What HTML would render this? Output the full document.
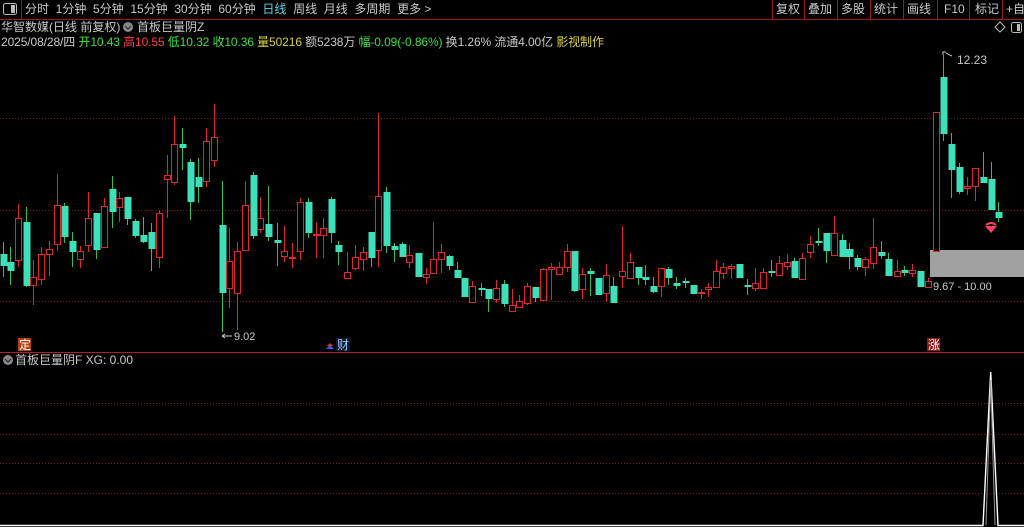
<!DOCTYPE html>
<html><head><meta charset="utf-8"><style>
*{margin:0;padding:0}
body{width:1024px;height:527px;background:#000;overflow:hidden;position:relative;font-family:"Liberation Sans","Noto Sans CJK SC",sans-serif;color:#c8c8c8;font-size:12px}
.t{position:absolute;white-space:nowrap;line-height:14px}
</style></head><body>
<svg width="1024" height="527" style="position:absolute;left:0;top:0" id="s" xmlns="http://www.w3.org/2000/svg">
<line x1="0" y1="19.5" x2="1024" y2="19.5" stroke="#a01818"/>
<line x1="21.5" y1="0" x2="21.5" y2="19" stroke="#a01818"/>
<g stroke="#a01818">
<line x1="772.5" y1="0" x2="772.5" y2="19"/><line x1="804.5" y1="0" x2="804.5" y2="19"/><line x1="837.5" y1="0" x2="837.5" y2="19"/><line x1="870.5" y1="0" x2="870.5" y2="19"/><line x1="903.5" y1="0" x2="903.5" y2="19"/><line x1="937.5" y1="0" x2="937.5" y2="19"/><line x1="969.5" y1="0" x2="969.5" y2="19"/><line x1="1002.5" y1="0" x2="1002.5" y2="19"/>
</g>
<rect x="3.5" y="3.5" width="13" height="11" rx="2" fill="none" stroke="#bbb"/><rect x="11" y="5" width="4" height="8" fill="#bbb"/>
<path d="M1000 22l5 5-5 5-5-5z" fill="none" stroke="#bbb"/>
<rect x="1011.5" y="22.5" width="10" height="10" rx="2" fill="none" stroke="#bbb"/><rect x="1017" y="24" width="3" height="7" fill="#bbb"/>
<g stroke="#7a1a1a" stroke-dasharray="1,2">
<line x1="0" y1="118.5" x2="1024" y2="118.5"/><line x1="0" y1="210.5" x2="1024" y2="210.5"/><line x1="0" y1="301.5" x2="1024" y2="301.5"/>
<line x1="0" y1="403.5" x2="1024" y2="403.5"/><line x1="0" y1="434.5" x2="1024" y2="434.5"/><line x1="0" y1="463.5" x2="1024" y2="463.5"/><line x1="0" y1="493.5" x2="1024" y2="493.5"/>
</g>
<line x1="0" y1="352.5" x2="1024" y2="352.5" stroke="#b02020"/>
<rect x="930" y="250" width="94" height="27" fill="#a0a0a0"/>
<g id="c"></g>
<path d="M943 55v-3h3M946 53q3 2 6 3" fill="none" stroke="#ccc"/>
<path d="M985 226h12l-6 7z" fill="#ff4060"/><path d="M986 225q5-4 10 0" fill="none" stroke="#ff4060" stroke-width="2"/>
<path d="M222 336h10M222 336l3-2M222 336l3 2" stroke="#ccc" fill="none"/>
<path d="M326 349l4-4 4 4z" fill="#3060e0"/><path d="M327 346l3-3 3 3z" fill="#e03030"/>
<rect x="336" y="338" width="14" height="13" fill="#0f1a2a"/>
<rect x="18" y="338" width="13" height="13" fill="#b84010"/>
<rect x="927" y="338" width="13" height="13" fill="#901818"/>
<circle cx="8" cy="360" r="5" fill="#888"/><path d="M5 359l3 3 3-3" stroke="#222" fill="none"/>
<circle cx="128" cy="27" r="5" fill="#888"/><path d="M125 26l3 3 3-3" stroke="#222" fill="none"/>
<path d="M0 525.5H983L990.7 372 998 525.5H1024" fill="none" stroke="#fff" stroke-width="1.4"/>
<path d="M986 525L990.7 380 995 525" fill="none" stroke="#999" stroke-width="1"/>
</svg>
<div class="t" style="left:25px;top:2px;color:#c8c8c8;font-size:12px;word-spacing:0">分时&nbsp; 1分钟&nbsp; 5分钟&nbsp; 15分钟&nbsp; 30分钟&nbsp; 60分钟&nbsp; <span style="color:#5ad8e8">日线</span>&nbsp; 周线&nbsp; 月线&nbsp; 多周期&nbsp; 更多 &gt;</div>
<div class="t" style="left:776px;top:2px">复权</div><div class="t" style="left:808px;top:2px">叠加</div><div class="t" style="left:841px;top:2px">多股</div><div class="t" style="left:874px;top:2px">统计</div><div class="t" style="left:907px;top:2px">画线</div><div class="t" style="left:944px;top:2px">F10</div><div class="t" style="left:975px;top:2px">标记</div><div class="t" style="left:1006px;top:2px">+自</div>
<div class="t" style="left:1px;top:20px">华智数媒(日线 前复权)</div>
<div class="t" style="left:137px;top:20px">首板巨量阴Z</div>
<div class="t" style="left:1px;top:35px;font-size:12px;letter-spacing:-0.1px">2025/08/28/四 <span style="color:#3ce03c">开10.43</span> <span style="color:#ff4040">高10.55</span> <span style="color:#3ce03c">低10.32</span> <span style="color:#3ce03c">收10.36</span> <span style="color:#d8d040">量</span><span style="color:#d8d040">50216</span> 额5238万 <span style="color:#3ce03c">幅-0.09(-0.86%)</span> 换1.26% 流通4.00亿 <span style="color:#d8d040">影视制作</span></div>
<div class="t" style="left:957px;top:53px">12.23</div>
<div class="t" style="left:933px;top:280px;font-size:11px">9.67 - 10.00</div>
<div class="t" style="left:234px;top:330px;font-size:11px">9.02</div>
<div class="t" style="left:19px;top:338px;color:#fff">定</div>
<div class="t" style="left:337px;top:338px;color:#9cc8ff">财</div>
<div class="t" style="left:928px;top:338px;color:#fff">涨</div>
<div class="t" style="left:15px;top:353px">首板巨量阴F XG: 0.00</div>
<script>
var d=[[3,254,266,242,277,0],[10,262,271,247,285,0],[18,218,260,204,267,1],[26,222,286,207,287,0],[33,277,285,260,305,1],[41,254,279,247,285,1],[49,249,254,241,276,1],[57,205,244,174,251,1],[64,206,237,203,243,0],[72,241,252,232,267,0],[80,251,259,246,268,1],[88,218,245,192,252,1],[96,213,250,213,259,0],[104,206,247,198,247,1],[112,189,212,176,228,0],[119,198,207,192,222,1],[127,197,219,197,225,0],[135,221,236,219,238,0],[143,235,242,217,243,0],[151,232,249,223,271,0],[159,213,257,210,268,1],[167,175,179,155,218,1],[174,144,182,116,185,1],[182,144,148,128,170,0],[190,162,202,159,220,0],[198,177,187,158,203,0],[206,141,181,128,187,1],[214,137,160,104,167,1],[222,225,293,181,332,0],[229,261,288,228,308,1],[237,251,293,242,330,1],[245,205,250,181,250,1],[253,175,236,172,239,0],[260,218,229,197,233,1],[268,224,237,186,241,0],[277,240,243,223,266,0],[284,251,256,226,262,1],[292,257,258,243,268,1],[300,202,251,198,260,1],[308,202,233,198,238,0],[316,234,235,222,258,1],[323,228,235,218,258,1],[331,199,233,197,243,0],[338,245,252,241,265,0],[347,272,278,252,278,1],[355,257,268,245,270,1],[363,252,259,247,271,1],[371,232,258,232,267,0],[378,196,250,113,267,1],[386,192,246,187,253,0],[394,246,250,243,262,0],[402,244,257,242,257,0],[409,255,262,245,268,1],[418,253,277,253,277,0],[426,274,277,268,284,1],[433,259,273,222,273,1],[441,252,259,244,273,1],[449,256,266,255,270,0],[457,270,278,262,278,0],[464,278,297,278,297,0],[472,286,302,281,302,1],[481,288,289,283,296,0],[488,289,299,289,312,0],[496,288,299,280,303,1],[504,284,304,280,307,0],[512,305,311,289,311,1],[519,301,307,295,307,1],[527,286,303,283,305,1],[535,287,298,287,302,0],[543,269,300,268,300,1],[551,267,269,263,300,1],[559,267,274,262,274,1],[567,251,267,244,272,1],[574,251,291,251,292,0],[582,274,289,268,299,1],[590,271,274,268,296,0],[598,278,295,278,295,0],[606,275,293,264,302,1],[613,286,303,277,303,0],[622,271,276,226,288,1],[630,262,278,253,278,1],[638,267,278,267,285,0],[645,277,280,265,285,0],[653,286,292,277,293,0],[661,268,286,268,297,1],[668,269,278,267,285,0],[676,283,286,277,289,0],[685,281,283,278,288,0],[693,285,294,285,294,0],[701,292,293,289,299,1],[708,287,289,283,297,1],[716,271,287,260,288,1],[723,267,273,263,279,1],[731,266,268,264,279,1],[739,264,278,264,278,0],[747,285,287,279,295,0],[755,283,288,268,291,1],[763,272,288,268,289,1],[771,271,273,260,277,0],[779,263,275,256,276,1],[787,262,266,254,270,1],[794,261,278,258,278,0],[802,258,279,253,280,1],[810,244,252,236,258,1],[818,241,242,228,246,0],[826,233,251,233,263,0],[834,233,255,216,255,1],[842,240,257,234,257,0],[849,249,257,243,269,0],[857,258,267,255,270,0],[865,259,267,257,276,1],[873,247,263,218,269,1],[881,252,256,241,259,0],[888,259,276,253,276,0],[897,271,276,260,277,1],[904,270,273,266,276,0],[912,270,273,264,277,1],[920,271,287,271,287,0],[928,281,287,278,288,1],[936,112,251,112,251,1],[943,77,134,55,141,0],[951,144,170,133,198,0],[959,167,192,163,194,0],[967,186,188,177,195,1],[975,168,186,168,201,1],[983,177,183,152,183,0],[991,179,210,162,210,0],[998,212,218,202,222,0]];
var h='';
d.forEach(function(c){var x=c[0],t=c[1],b=c[2],hi=c[3],lo=c[4],r=c[5];var col=r?'#e02828':'#30c050';
h+='<line x1="'+(x+.5)+'" y1="'+hi+'" x2="'+(x+.5)+'" y2="'+lo+'" stroke="'+col+'"/>';
if(r){var hh=Math.max(b-t,1);h+='<rect x="'+(x-2.5)+'" y="'+(t+.5)+'" width="6" height="'+hh+'" fill="#000" stroke="#e02828"/>';}
else{h+='<rect x="'+(x-2.5)+'" y="'+t+'" width="7" height="'+Math.max(b-t,2)+'" fill="#3de0b8"/>';}
});
document.getElementById('c').innerHTML=h;
</script>
</body></html>
